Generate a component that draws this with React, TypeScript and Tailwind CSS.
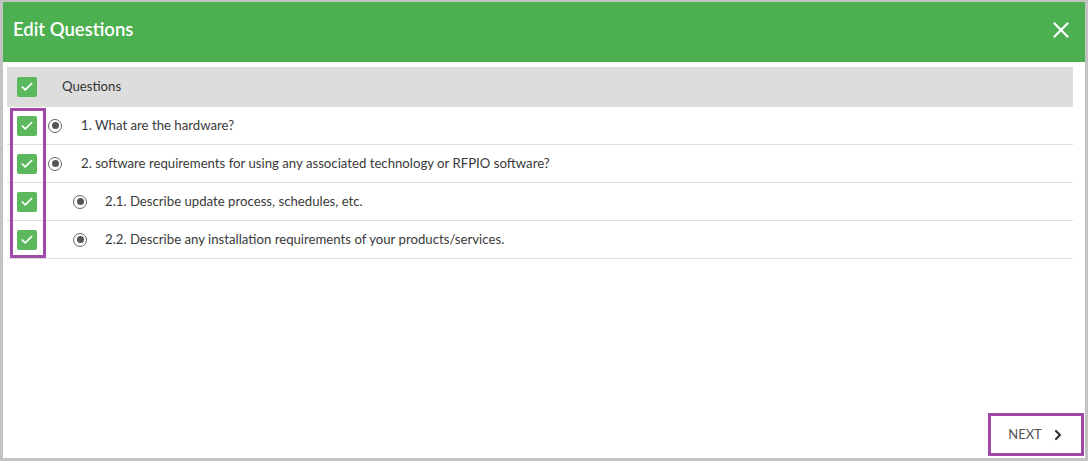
import { Check, ChevronRight, X } from "lucide-react";

type Row = { label: string; indent: boolean };

const ROWS: Row[] = [
  { label: "1. What are the hardware?", indent: false },
  { label: "2. software requirements for using any associated technology or RFPIO software?", indent: false },
  { label: "2.1. Describe update process, schedules, etc.", indent: true },
  { label: "2.2. Describe any installation requirements of your products/services.", indent: true },
];

function CheckBox() {
  return (
    <span className="flex h-[20px] w-[20px] shrink-0 items-center justify-center rounded-[2px] bg-[#5cb85c]">
      <Check className="h-[14px] w-[14px] text-white" strokeWidth={3} />
    </span>
  );
}

function Radio() {
  return (
    <span className="flex h-[14px] w-[14px] shrink-0 items-center justify-center rounded-full border-[1.5px] border-[#666]">
      <span className="h-[7px] w-[7px] rounded-full bg-[#555]" />
    </span>
  );
}

export default function App() {
  return (
    <div
      className="h-[461px] w-[1088px] bg-[#c3c3c3] pb-[3px] pl-[3px] pr-[3px] pt-[2px]"
      style={{ fontFamily: "Lato, 'Open Sans', sans-serif" }}
    >
      <div className="flex h-full flex-col bg-white">
        <div className="flex h-[60px] shrink-0 items-center justify-between bg-[#4caf50] pb-[5px] pl-[10px] pr-[11px]">
          <h1 className="text-[18.5px] font-semibold text-white">Edit Questions</h1>
          <X className="h-[26px] w-[26px] text-white" strokeWidth={2.1} />
        </div>

        <div className="relative ml-[4px] mr-[12px] mt-[5px]">
          <div className="flex h-[40px] items-center bg-[#dddddd] pl-[10px]">
            <CheckBox />
            <span className="ml-[25px] text-[13.2px] text-[#333]">Questions</span>
          </div>
          {ROWS.map((row) => (
            <div key={row.label} className="flex h-[38px] items-center border-b border-[#dedede] pl-[10px]">
              <CheckBox />
              <span className={row.indent ? "ml-[36px]" : "ml-[11px]"}>
                <Radio />
              </span>
              <span className={row.indent ? "ml-[18px] text-[13.2px] text-[#3a3a3a]" : "ml-[19px] text-[13.2px] text-[#3a3a3a]"}>
                {row.label}
              </span>
            </div>
          ))}
          <div className="pointer-events-none absolute left-[3px] top-[41px] h-[150px] w-[36px] border-[3px] border-[#9e4aa6]" />
        </div>

        <div className="mt-auto flex justify-end pb-[2px] pr-[1px]">
          <button
            type="button"
            className="flex h-[43px] w-[96px] items-center justify-center gap-[8px] border-[3px] border-[#9e4aa6] bg-white pl-[2px] text-[13px] text-[#555]"
          >
            NEXT
            <ChevronRight className="h-[16px] w-[16px] text-[#333]" strokeWidth={3.2} />
          </button>
        </div>
      </div>
    </div>
  );
}
